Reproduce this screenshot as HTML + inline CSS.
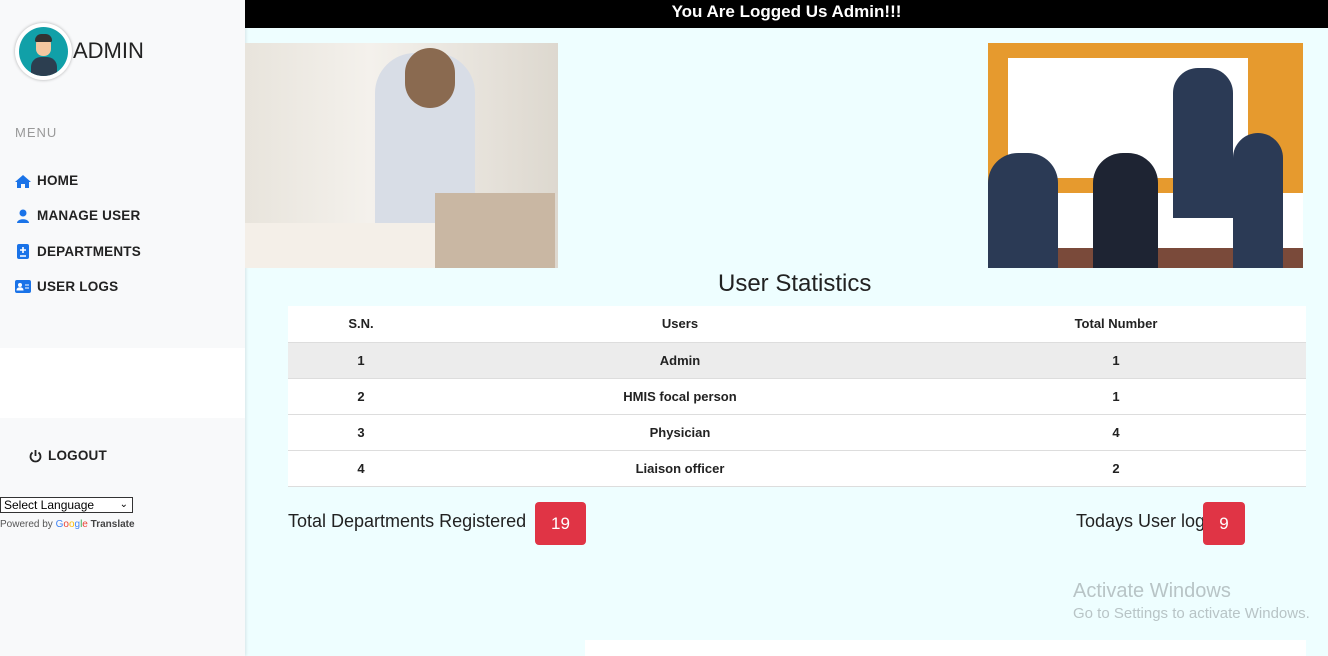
<!DOCTYPE html>
<html><head><meta charset="utf-8"><style>
*{margin:0;padding:0;box-sizing:border-box}
body{width:1328px;height:656px;overflow:hidden;font-family:"Liberation Sans",sans-serif;background:#eefeff;position:relative}
.side{position:absolute;left:0;top:0;width:245px;height:656px;background:#f8f9fa;box-shadow:1px 0 3px rgba(0,0,0,.1)}
.white{position:absolute;left:0;top:348px;width:245px;height:70px;background:#fff}
.av{position:absolute;left:15px;top:23px;width:57px;height:57px;border-radius:50%;background:#fff;box-shadow:0 0 3px rgba(0,0,0,.3)}
.av .c{position:absolute;left:4px;top:4px;width:49px;height:49px;border-radius:50%;background:#11a0a8;overflow:hidden}
.adm{position:absolute;left:73px;top:38px;font-size:22px;color:#222}
.menu{position:absolute;left:15px;top:125px;font-size:13px;color:#999;letter-spacing:1px}
.nav{position:absolute;left:15px;font-size:13.5px;font-weight:bold;color:#222;letter-spacing:.2px;display:flex;align-items:center}
.nav svg{margin-right:6px}
.top{position:absolute;left:245px;top:0;right:0;height:28px;background:#000;color:#fff;font-weight:bold;font-size:17px;text-align:center;line-height:24px}
h2{position:absolute;left:718px;top:270px;font-weight:normal;font-size:24px;color:#222}
table{position:absolute;left:288px;top:306px;width:1018px;border-collapse:collapse;background:#fff;font-size:13px;font-weight:bold;color:#222}
td{height:36px;text-align:center;border-bottom:1px solid #ddd}
tr.g td{background:#ececec}
.lbl{position:absolute;font-size:18px;color:#222}
.badge{position:absolute;background:#e03445;color:#fff;border-radius:4px;font-size:17px;text-align:center;line-height:43px;width:51px;height:43px}
</style></head><body>
<div class="side">
<div class="white"></div>
<div class="av"><div class="c"><div style="position:absolute;left:12px;top:30px;width:26px;height:22px;background:#2c3e50;border-radius:10px 10px 0 0"></div><div style="position:absolute;left:17px;top:10px;width:15px;height:19px;background:#f5c7a0;border-radius:7px"></div><div style="position:absolute;left:16px;top:7px;width:17px;height:8px;background:#333;border-radius:8px 8px 2px 2px"></div></div></div>
<div class="adm">ADMIN</div>
<div class="menu">MENU</div>
<div class="nav" style="top:173px"><svg width="16" height="14" viewBox="0 0 16 14"><path d="M8 1L0 8h2v6h4v-4h4v4h4V8h2z" fill="#1a73e8"/></svg>HOME</div>
<div class="nav" style="top:208px"><svg width="16" height="14" viewBox="0 0 16 14"><circle cx="8" cy="4" r="3.5" fill="#1a73e8"/><path d="M2 14c0-5 12-5 12 0z" fill="#1a73e8"/></svg>MANAGE USER</div>
<div class="nav" style="top:244px"><svg width="16" height="15" viewBox="0 0 16 15"><rect x="2" y="0" width="12" height="15" rx="2" fill="#1a73e8"/><path d="M8 3v6M5 6h6M5 12h6" stroke="#fff" stroke-width="1.6"/></svg>DEPARTMENTS</div>
<div class="nav" style="top:279px"><svg width="16" height="13" viewBox="0 0 16 13"><rect width="16" height="13" rx="2" fill="#1a73e8"/><circle cx="5" cy="5" r="2" fill="#fff"/><path d="M2 10c0-3 6-3 6 0zM10 5h4M10 8h4" stroke="#fff" fill="#fff"/></svg>USER LOGS</div>
<div class="nav" style="left:29px;top:448px"><svg width="13" height="14" viewBox="0 0 13 14"><path d="M6.5 1v6M3.5 3.5a5 5 0 1 0 6 0" stroke="#222" stroke-width="1.8" fill="none"/></svg>LOGOUT</div>
<div style="position:absolute;left:0;top:497px;width:133px;height:16px;border:1px solid #333;background:#fff;font-size:12px;line-height:14px;padding-left:3px">Select Language<span style="position:absolute;right:4px;top:0;font-size:10px">&#8964;</span></div>
<div style="position:absolute;left:0;top:519px;font-size:10px;color:#555">Powered by <b style="color:#4285f4;font-weight:normal">G<span style="color:#ea4335">o</span><span style="color:#fbbc05">o</span>g<span style="color:#34a853">l</span><span style="color:#ea4335">e</span></b> <span style="color:#444;font-weight:bold">Translate</span></div>
</div>
<div class="top">You Are Logged Us Admin!!!</div>
<div style="position:absolute;left:245px;top:43px;width:313px;height:225px;background:linear-gradient(90deg,#e8e4dc,#f4f1ec 40%,#ddd8cf);overflow:hidden">
<div style="position:absolute;left:130px;top:10px;width:100px;height:170px;background:#d8dde6;border-radius:40px 40px 0 0"></div>
<div style="position:absolute;left:160px;top:5px;width:50px;height:60px;background:#8a6a50;border-radius:25px"></div>
<div style="position:absolute;left:190px;top:150px;width:120px;height:75px;background:#c9b7a3"></div>
<div style="position:absolute;left:0;top:180px;width:190px;height:45px;background:#f4efe8"></div>
</div>
<div style="position:absolute;left:988px;top:43px;width:315px;height:225px;background:#e69a2e;overflow:hidden">
<div style="position:absolute;left:20px;top:15px;width:240px;height:120px;background:#fff"></div>
<div style="position:absolute;left:0;top:150px;width:315px;height:60px;background:#fff"></div>
<div style="position:absolute;left:0;top:205px;width:315px;height:20px;background:#7a4a3a"></div>
<div style="position:absolute;left:0;top:110px;width:70px;height:115px;background:#2b3a55;border-radius:30px 30px 0 0"></div>
<div style="position:absolute;left:105px;top:110px;width:65px;height:115px;background:#1e2433;border-radius:30px 30px 0 0"></div>
<div style="position:absolute;left:185px;top:25px;width:60px;height:150px;background:#2b3a55;border-radius:25px 25px 0 0"></div>
<div style="position:absolute;left:245px;top:90px;width:50px;height:135px;background:#2b3a55;border-radius:25px 25px 0 0"></div>
</div>
<h2>User Statistics</h2>
<table>
<tr><td style="width:146px">S.N.</td><td>Users</td><td style="width:380px">Total Number</td></tr>
<tr class="g"><td>1</td><td>Admin</td><td>1</td></tr>
<tr><td>2</td><td>HMIS focal person</td><td>1</td></tr>
<tr><td>3</td><td>Physician</td><td>4</td></tr>
<tr><td>4</td><td>Liaison officer</td><td>2</td></tr>
</table>
<div class="lbl" style="left:288px;top:511px">Total Departments Registered</div>
<div class="badge" style="left:535px;top:502px">19</div>
<div class="lbl" style="left:1076px;top:511px">Todays User log</div>
<div class="badge" style="left:1203px;top:502px;width:42px">9</div>
<div style="position:absolute;left:1073px;top:580px;font-size:20px;color:#b8c4c6">Activate Windows</div>
<div style="position:absolute;left:1073px;top:605px;font-size:15px;color:#b8c4c6">Go to Settings to activate Windows.</div>
<div style="position:absolute;left:585px;top:640px;width:721px;height:16px;background:#fff"></div>
</body></html>
